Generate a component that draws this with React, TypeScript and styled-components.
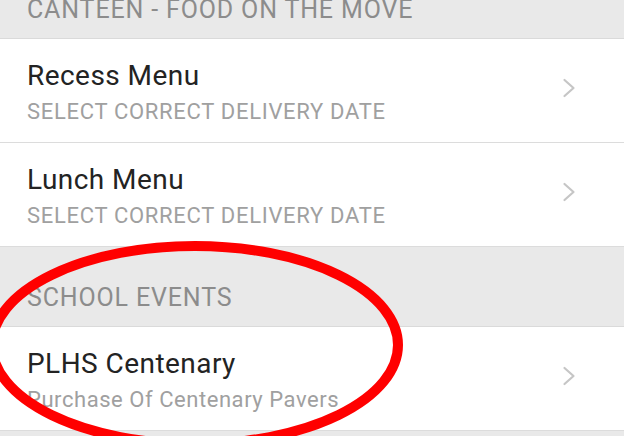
import styled, { createGlobalStyle } from "styled-components";

const GlobalStyle = createGlobalStyle`
  html, body {
    margin: 0;
    padding: 0;
    background: #e9e9e9;
    overflow: hidden;
  }
  body {
    font-family: Roboto, "Liberation Sans", Arial, sans-serif;
  }
`;

const Screen = styled.div`
  position: relative;
  width: 624px;
  height: 436px;
  overflow: hidden;
  background: #e9e9e9;
`;

const List = styled.div`
  margin-top: -41px;
  display: flex;
  flex-direction: column;
`;

const SectionHeader = styled.div`
  height: 80px;
  box-sizing: border-box;
  padding: 0 27px 16px;
  display: flex;
  align-items: flex-end;
  background: #e9e9e9;
  border-bottom: 1px solid #dadada;
  color: #8c8c8c;
  font-size: 25px;
  letter-spacing: 0.85px;
  line-height: 1;
`;

const Row = styled.div`
  height: 104px;
  box-sizing: border-box;
  padding: 20px 48px 0 27px;
  display: flex;
  align-items: flex-start;
  background: #ffffff;
  border-bottom: 1px solid #dcdcdc;
`;

const RowText = styled.div`
  flex: 1;
  display: flex;
  flex-direction: column;
`;

const Title = styled.div`
  color: #232323;
  font-size: 28px;
  line-height: 34px;
  letter-spacing: 0.45px;
`;

const Subtitle = styled.div<{ $caps?: boolean }>`
  margin-top: 4px;
  color: #a0a0a0;
  font-size: 22px;
  line-height: 30px;
  letter-spacing: ${(props) => (props.$caps ? "0.7px" : "0.55px")};
  text-transform: ${(props) => (props.$caps ? "uppercase" : "none")};
`;

const Chevron = styled.svg`
  width: 14px;
  height: 20px;
  flex-shrink: 0;
  margin-top: 19px;
`;

const Circle = styled.svg`
  position: absolute;
  left: 0;
  top: 0;
  pointer-events: none;
`;

interface IItem {
  title: string;
  sub: string;
  caps?: boolean;
}

interface ISection {
  name: string;
  items: IItem[];
}

const sections: ISection[] = [
  {
    name: "CANTEEN - FOOD ON THE MOVE",
    items: [
      { title: "Recess Menu", sub: "Select correct delivery date", caps: true },
      { title: "Lunch Menu", sub: "Select correct delivery date", caps: true },
    ],
  },
  {
    name: "SCHOOL EVENTS",
    items: [{ title: "PLHS Centenary", sub: "Purchase Of Centenary Pavers" }],
  },
];

function App() {
  return (
    <Screen>
      <GlobalStyle />
      <List>
        {sections.map((section) => (
          <div key={section.name}>
            <SectionHeader>{section.name}</SectionHeader>
            {section.items.map((item) => (
              <Row key={item.title}>
                <RowText>
                  <Title>{item.title}</Title>
                  <Subtitle $caps={item.caps}>{item.sub}</Subtitle>
                </RowText>
                <Chevron viewBox="0 0 14 20">
                  <path
                    d="M2.5 2 L11.5 10 L2.5 18"
                    fill="none"
                    stroke="#c6c6c6"
                    strokeWidth="2.2"
                    strokeLinecap="round"
                    strokeLinejoin="round"
                  />
                </Chevron>
              </Row>
            ))}
          </div>
        ))}
      </List>
      {/* red marker drawn over the screenshot */}
      <Circle width="624" height="436" viewBox="0 0 624 436">
        <ellipse
          cx="195"
          cy="345"
          rx="203"
          ry="99"
          fill="none"
          stroke="#ff0000"
          strokeWidth="10"
        />
      </Circle>
    </Screen>
  );
}

export default App;
